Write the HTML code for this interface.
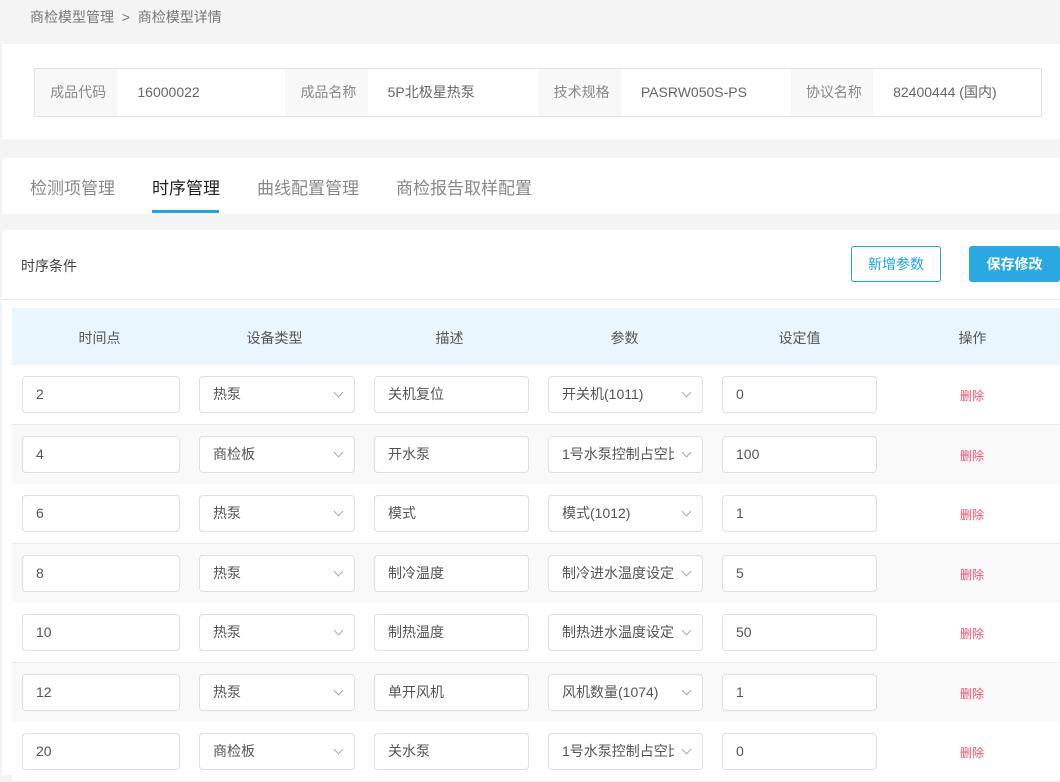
<!DOCTYPE html>
<html><head><meta charset="utf-8"><style>
*{margin:0;padding:0;box-sizing:border-box}
body{width:1060px;height:775px;overflow:hidden;background:#f4f4f4;font-family:"Liberation Sans","Noto Sans CJK SC",sans-serif;color:#555;position:relative}
.a{position:absolute}
.crumb{left:30px;top:7px;font-size:14px;color:#777}
.info{left:2px;top:44px;width:1058px;height:95px;background:#fff}
.ibox{left:34px;top:68px;width:1008px;height:49px;border:1px solid #e3e3e3;background:#fff;display:flex;font-size:14px}
.ibox .l{width:83px;background:#f8f8f8;color:#888;text-align:center;padding-left:4px;line-height:47px}
.ibox .v{width:169px;color:#666;padding-left:20px;line-height:47px}
.tabs{left:2px;top:158px;width:1058px;height:56px;background:#fff;font-size:17px}
.tab{position:absolute;top:16px;color:#888}
.card{left:2px;top:230px;width:1058px;height:545px;background:#fff}
.btn{position:absolute;top:246px;height:36px;border-radius:3px;font-size:14px;line-height:34px;text-align:center}
.row{position:absolute;left:12px;width:1048px;height:60px;border-bottom:1px solid #e8ecf0}
.inp{position:absolute;top:11px;height:37px;border:1px solid #dcdfe6;border-radius:4px;background:#fff;font-size:14px;color:#555;line-height:35px;padding-left:13px;white-space:nowrap}
.inp span{display:block;overflow:hidden}
.sel::after{content:"";position:absolute;right:12px;top:12px;width:6px;height:6px;border-right:1px solid #aaa;border-bottom:1px solid #aaa;transform:rotate(45deg)}
.sel{padding-right:28px}
.del{position:absolute;left:948px;top:22px;font-size:12px;color:#f0506e}
.hd{position:absolute;top:20px;font-size:14px;color:#555;width:175px;text-align:center}
</style></head><body>
<div class="a crumb">商检模型管理 &nbsp;&gt;&nbsp; 商检模型详情</div>
<div class="a info"></div>
<div class="a ibox">
<div class="l">成品代码</div><div class="v">16000022</div>
<div class="l">成品名称</div><div class="v" style="width:172px">5P北极星热泵</div>
<div class="l">技术规格</div><div class="v" style="width:171px">PASRW050S-PS</div>
<div class="l">协议名称</div><div class="v">82400444 (国内)</div>
</div>
<div class="a tabs">
<div class="tab" style="left:28px">检测项管理</div>
<div class="tab" style="left:150px;color:#222">时序管理</div>
<div class="a" style="left:150px;top:52px;width:67px;height:3px;background:#1ba6e0"></div>
<div class="tab" style="left:255px">曲线配置管理</div>
<div class="tab" style="left:394px">商检报告取样配置</div>
</div>
<div class="a card"></div>
<div class="a" style="left:21px;top:256px;font-size:14px;color:#444">时序条件</div>
<div class="btn" style="left:851px;width:90px;border:1px solid #1ba6e0;color:#1ba6e0;background:#fff">新增参数</div>
<div class="btn" style="left:969px;width:91px;background:#28a9e2;color:#fff;font-weight:bold;border:1px solid #28a9e2">保存修改</div>
<div class="a" style="left:2px;top:299px;width:1058px;height:1px;background:#e8e8e8"></div>
<div class="a" style="left:12px;top:308px;width:1048px;height:57px;background:#e9f6fd">
<div class="hd" style="left:0">时间点</div><div class="hd" style="left:175px">设备类型</div><div class="hd" style="left:350px">描述</div><div class="hd" style="left:525px">参数</div><div class="hd" style="left:700px">设定值</div><div class="hd" style="left:873px">操作</div>
</div>
<div id="rows"></div>
<script>
var d=[["2","热泵","关机复位","开关机(1011)","0"],["4","商检板","开水泵","1号水泵控制占空比","100"],["6","热泵","模式","模式(1012)","1"],["8","热泵","制冷温度","制冷进水温度设定值","5"],["10","热泵","制热温度","制热进水温度设定值","50"],["12","热泵","单开风机","风机数量(1074)","1"],["20","商检板","关水泵","1号水泵控制占空比","0"]];
var h="";
d.forEach(function(r,i){var t=365+i*59.5;
h+='<div class="row" style="top:'+t+'px;background:'+(i%2?'#f9f9fa':'#fff')+'">'+
'<div class="inp" style="left:10px;width:158px"><span>'+r[0]+'</span></div>'+
'<div class="inp sel" style="left:187px;width:156px"><span>'+r[1]+'</span></div>'+
'<div class="inp" style="left:362px;width:155px"><span>'+r[2]+'</span></div>'+
'<div class="inp sel" style="left:536px;width:155px"><span>'+r[3]+'</span></div>'+
'<div class="inp" style="left:710px;width:155px"><span>'+r[4]+'</span></div>'+
'<div class="del">删除</div></div>';});
document.getElementById("rows").innerHTML=h;
</script>
</body></html>
